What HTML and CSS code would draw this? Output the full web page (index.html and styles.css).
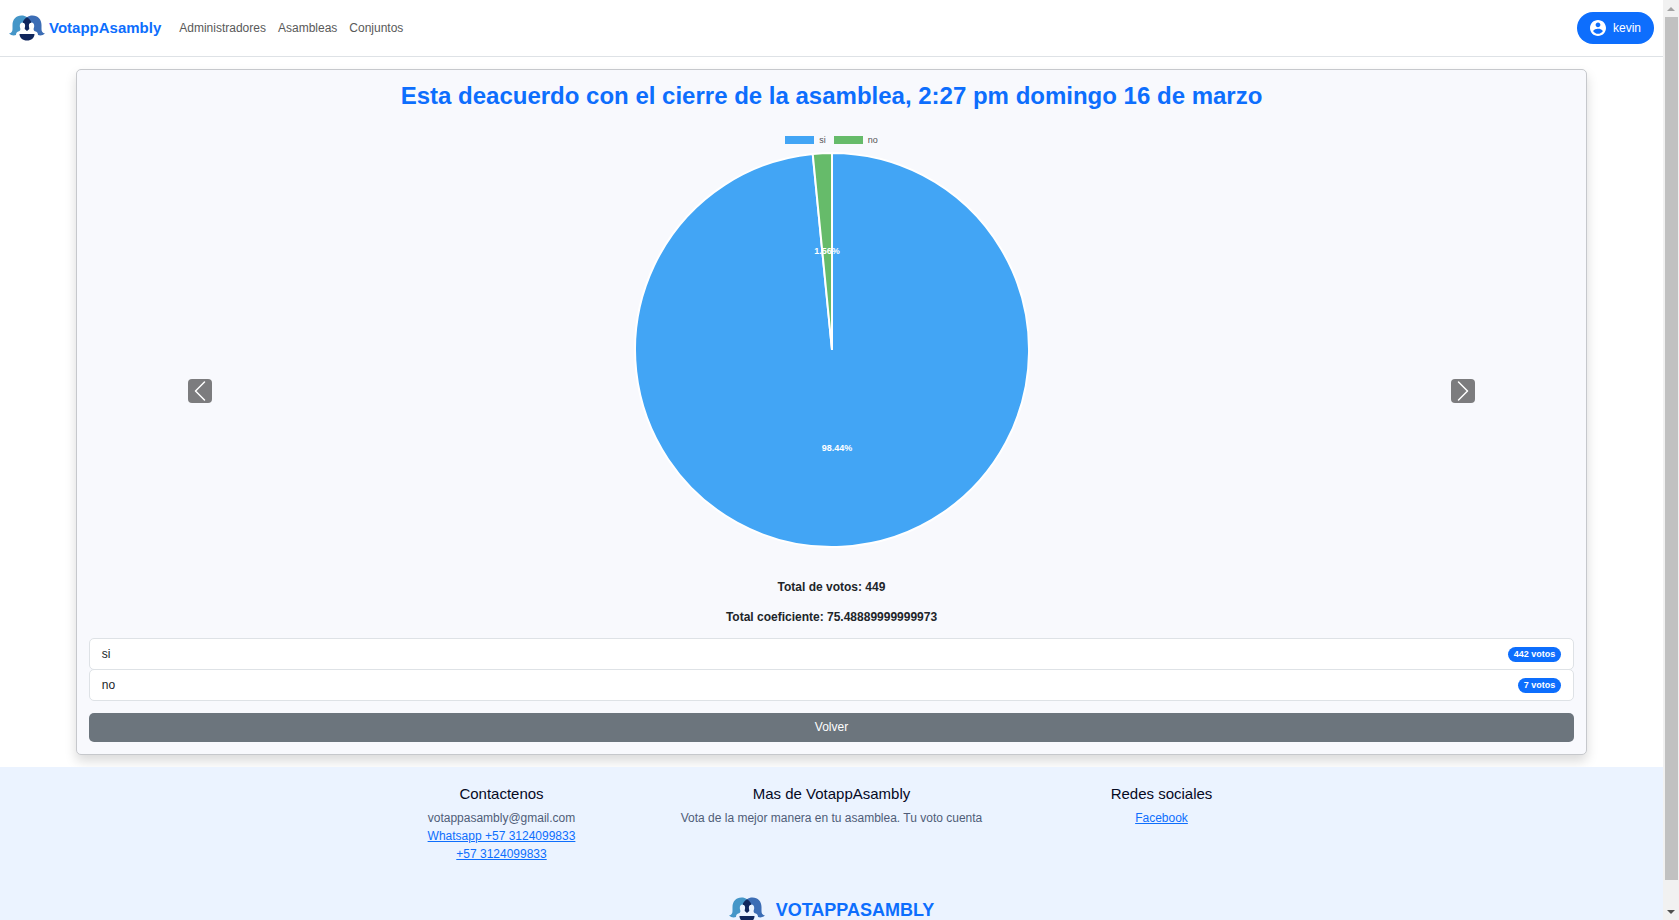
FILE: index.html
```html
<!DOCTYPE html>
<html lang="es">
<head>
<meta charset="utf-8">
<meta name="viewport" content="width=device-width, initial-scale=1">
<title>VotappAsambly</title>
<link rel="stylesheet" href="styles.css">
</head>
<body>
<svg class="defs" aria-hidden="true">
  <symbol id="logo" viewBox="0 0 36 26">
    <path fill="#4596c8" d="M0 18.500C2.500 18 3.500 16.500 3.500 14V10C3.500 4.500 7 .5 12.500 .5c2.300 0 4 .6 5.500 1.800V10h-1.700c0-1.700-1.100-2.500-2.700-2.500-1.900 0-2.800 1.500-2.800 3.500 0 1.500.6 2 .6 3.200 0 1.300-.8 1.800-2.200 2.300S7 18 7 20c-2.500.9-5 .3-7-1.500z"/>
    <path fill="#3c6db5" d="M36 18.500c-2.500-.5-3.500-2-3.500-4.500V10C32.500 4.500 29 .5 23.500 .5c-2.300 0-4 .6-5.500 1.800V10h1.700c0-1.700 1.100-2.500 2.700-2.500 1.900 0 2.800 1.500 2.800 3.500 0 1.500-.6 2-.6 3.200 0 1.300.8 1.800 2.200 2.300S29 18 29 20c2.500.9 5 .3 7-1.500z"/>
    <path fill="#10265c" d="M18 2.300c2.600 1.700 4.200 3.700 4.200 5.400-1.600 0-2.300 1.200-2.300 2.800 0 1.300.4 2 .4 3.500L18 16l-2.300-2c0-1.500.4-2.200.4-3.500 0-1.600-.7-2.800-2.300-2.800 0-1.700 1.600-3.700 4.200-5.400z"/>
    <path fill="#10265c" d="M10.500 19h15c0 3.800-3.200 6.500-7.500 6.500S10.500 22.800 10.500 19z"/>
  </symbol>
</svg>
<div class="window">
  <div class="page">
    <header class="navbar">
      <a class="brand" href="#"><svg class="logo" aria-hidden="true"><use href="#logo"/></svg>VotappAsambly</a>
      <nav class="nav">
        <a href="#">Administradores</a>
        <a href="#">Asambleas</a>
        <a href="#">Conjuntos</a>
      </nav>
      <button class="user" type="button">
        <svg class="user-icon" viewBox="2 2 20 20" aria-hidden="true"><path fill="currentColor" d="M12 2C6.480 2 2 6.480 2 12s4.480 10 10 10 10-4.480 10-10S17.520 2 12 2zm0 3c1.660 0 3 1.340 3 3s-1.340 3-3 3-3-1.340-3-3 1.340-3 3-3zm0 14.200c-2.500 0-4.710-1.280-6-3.220.03-1.990 4-3.080 6-3.080 1.990 0 5.970 1.090 6 3.080-1.290 1.940-3.500 3.220-6 3.220z"/></svg>
        kevin
      </button>
    </header>

    <main class="card">
      <h1 class="title">Esta deacuerdo con el cierre de la asamblea, 2:27 pm domingo 16 de marzo</h1>
      <section class="carousel">
        <div class="control">
          <button class="arrow" type="button" aria-label="Anterior"><svg viewBox="0 0 16 16" aria-hidden="true"><path d="M11 2 5 8l6 6"/></svg></button>
        </div>
        <div class="slide">
          <ul class="legend">
            <li><span class="swatch swatch-yes"></span>si</li>
            <li><span class="swatch swatch-no"></span>no</li>
          </ul>
          <svg class="pie" viewBox="-198 -198 396 396" role="img" aria-label="Resultado de la votación">
            <g stroke="#fff" stroke-width="2" stroke-linejoin="bevel">
              <path fill="#42a5f5" d="M0 0V-197A197 197 0 1 1 -19.280 -196.050Z"/>
              <path fill="#66bb6a" d="M0 0-19.280-196.050A197 197 0 0 1 0-197Z"/>
            </g>
            <text x="5" y="101">98.44%</text>
            <text x="-5" y="-96">1.56%</text>
          </svg>
          <p class="total">Total de votos: 449</p>
          <p class="total">Total coeficiente: 75.48889999999973</p>
        </div>
        <div class="control">
          <button class="arrow" type="button" aria-label="Siguiente"><svg viewBox="0 0 16 16" aria-hidden="true"><path d="m5 2 6 6-6 6"/></svg></button>
        </div>
      </section>
      <ul class="results">
        <li>si <span class="badge">442 votos</span></li>
        <li>no <span class="badge">7 votos</span></li>
      </ul>
      <button class="back" type="button">Volver</button>
    </main>

    <footer class="footer">
      <div class="columns">
        <section>
          <h2>Contactenos</h2>
          <p>votappasambly@gmail.com</p>
          <p><a href="#">Whatsapp +57 3124099833</a></p>
          <p><a href="#">+57 3124099833</a></p>
        </section>
        <section>
          <h2>Mas de VotappAsambly</h2>
          <p>Vota de la mejor manera en tu asamblea. Tu voto cuenta</p>
        </section>
        <section>
          <h2>Redes sociales</h2>
          <p><a href="#">Facebook</a></p>
        </section>
      </div>
      <div class="footer-brand"><svg class="logo" aria-hidden="true"><use href="#logo"/></svg>VOTAPPASAMBLY</div>
    </footer>
  </div>
  <div class="scrollbar" aria-hidden="true">
    <svg class="cap" viewBox="0 0 16 17"><path fill="#a3a3a3" d="M8 7l4 4H4z"/></svg>
    <div class="track"><div class="thumb"></div></div>
    <svg class="cap" viewBox="0 0 16 17"><path fill="#505050" d="M4 7h8l-4 4z"/></svg>
  </div>
</div>
</body>
</html>
```
FILE: styles.css
```css
* { box-sizing: border-box; }

body {
  margin: 0;
  background: #fff;
  color: #212529;
  font: 12px/18px "Liberation Sans", Arial, sans-serif;
}

h1, h2, p, ul { margin: 0; padding: 0; }
ul { list-style: none; }
button { border: 0; font: inherit; cursor: pointer; }
a { color: #0d6efd; }

.defs { display: none; }

.window {
  display: grid;
  grid-template-columns: minmax(0, 1fr) 16px;
  height: 100vh;
}

.page {
  overflow-y: auto;
  scrollbar-width: none;
}

.navbar {
  display: flex;
  align-items: center;
  gap: 18px;
  padding: 12px 9px;
  border-bottom: 1px solid #dee2e6;
}

.logo { width: 36px; height: 26px; }

.brand {
  display: flex;
  align-items: center;
  gap: 4px;
  font-size: 15px;
  font-weight: 700;
  text-decoration: none;
}

.nav { display: flex; flex: 1; gap: 12px; }
.nav a { color: #595959; text-decoration: none; }

.user {
  display: flex;
  align-items: center;
  gap: 7px;
  padding: 7px 13px;
  border-radius: 16px;
  background: #0d6efd;
  color: #fff;
}

.user-icon { width: 16px; height: 16px; }

.card {
  width: calc(100% * 11 / 12 - 13px);
  margin: 12px auto;
  padding: 12px;
  border: 1px solid #c6c8cc;
  border-radius: 5px;
  background: #f8f9fd;
  box-shadow: 0 6px 12px rgba(0, 0, 0, .15);
}

.title {
  margin-bottom: 13px;
  color: #0d6efd;
  font-size: 24px;
  line-height: 28px;
  text-align: center;
}

.carousel {
  display: grid;
  grid-template-columns: 15% minmax(0, 1fr) 15%;
}

.control {
  display: flex;
  align-items: center;
  justify-content: center;
  padding-top: 20px;
}

.arrow {
  width: 24px;
  height: 24px;
  padding: 0;
  border-radius: 4px;
  background: #7c7c7e;
}

.arrow svg {
  display: block;
  fill: none;
  stroke: #fff;
  stroke-linecap: round;
  stroke-linejoin: round;
}

.slide {
  display: flex;
  flex-direction: column;
  align-items: center;
  padding-top: 12px;
}

.legend {
  display: flex;
  gap: 8px;
  margin-bottom: 7px;
  color: #555;
  font-size: 9px;
  line-height: 10px;
}

.legend li { display: flex; align-items: center; gap: 5px; }
.swatch { width: 29px; height: 8px; }
.swatch-yes { background: #42a5f5; }
.swatch-no { background: #66bb6a; }

.pie { width: 396px; max-width: 100%; margin-bottom: 30px; }

.pie text {
  fill: #fff;
  font-size: 9px;
  font-weight: 700;
  text-anchor: middle;
}

.total { margin-bottom: 12px; font-weight: 700; }

.results li {
  display: flex;
  align-items: center;
  justify-content: space-between;
  padding: 6px 12px;
  border: 1px solid #dee2e6;
  border-radius: 5px;
  background: #fff;
}

.results li + li { margin-top: -1px; }

.badge {
  padding: 3px 6px;
  border-radius: 8px;
  background: #0d6efd;
  color: #fff;
  font-size: 9px;
  font-weight: 700;
  line-height: 9px;
}

.back {
  width: 100%;
  margin-top: 12px;
  padding: 5px;
  border-radius: 5px;
  background: #6c757d;
  color: #fff;
  line-height: 19px;
}

.footer {
  padding: 18px 12px;
  background: #ebf3ff;
  color: #4f5d78;
  text-align: center;
}

.columns {
  display: grid;
  grid-template-columns: repeat(3, 1fr);
  max-width: 990px;
  margin: 0 auto 34px;
}

.footer h2 {
  margin-bottom: 6px;
  color: #05091f;
  font-size: 15px;
  font-weight: 400;
}

.footer-brand {
  display: flex;
  align-items: center;
  justify-content: center;
  gap: 11px;
  color: #0d6efd;
  font-size: 18px;
  font-weight: 700;
  line-height: 26px;
}

.scrollbar {
  display: flex;
  flex-direction: column;
  background: #f1f1f1;
}

.cap { height: 17px; }
.track { flex: 1; padding: 0 1px 0 2px; }
.thumb { height: calc(100% - 23px); background: #c1c1c1; }
```
